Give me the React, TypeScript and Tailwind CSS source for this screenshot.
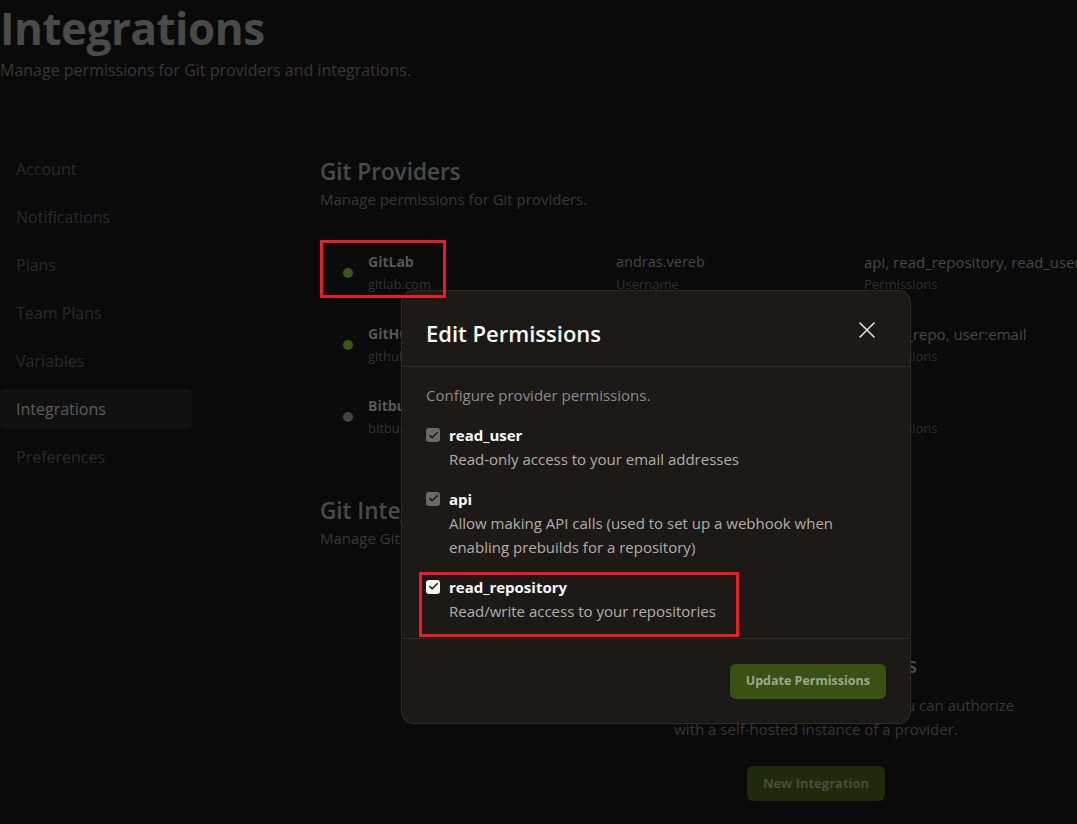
import { Check } from "lucide-react"

const navItems = ["Account", "Notifications", "Plans", "Team Plans", "Variables", "Integrations", "Preferences"]

const providers = [
  { name: "GitLab", host: "gitlab.com", user: "andras.vereb", perms: "api, read_repository, read_user", on: true },
  { name: "GitHub", host: "github.com", user: "andras-vereb", perms: "public_repo, user:email", on: true },
  { name: "Bitbucket", host: "bitbucket.org", user: "", perms: "", on: false },
]

const scopes = [
  { name: "read_user", desc: "Read-only access to your email addresses", locked: true },
  { name: "api", desc: "Allow making API calls (used to set up a webhook when enabling prebuilds for a repository)", locked: true },
  { name: "read_repository", desc: "Read/write access to your repositories", locked: false },
]

function ProviderRow({ p }) {
  return (
    <div className="flex h-[72px] items-center">
      <div className="w-[296px] flex items-center pl-[23px] gap-[15px]">
        <span className={`w-[10px] h-[10px] rounded-full ${p.on ? "bg-[#3a560e]" : "bg-[#444444]"}`} />
        <div className="flex flex-col">
          <span className="text-[14px] font-bold leading-[22px] text-[#575757]">{p.name}</span>
          <span className="text-[13px] leading-[22px] text-[#333333]">{p.host}</span>
        </div>
      </div>
      <div className="w-[248px] flex flex-col">
        <span className="text-[14.5px] leading-[22px] text-[#474747]">{p.user || "—"}</span>
        <span className="text-[13px] leading-[22px] text-[#2f2f2f]">Username</span>
      </div>
      <div className="flex flex-col whitespace-nowrap">
        <span className="text-[15px] leading-[22px] text-[#474747]">{p.perms || "—"}</span>
        <span className="text-[13px] leading-[22px] text-[#2f2f2f]">Permissions</span>
      </div>
    </div>
  )
}

function Scope({ s }) {
  return (
    <div className="flex gap-[9px]">
      <div
        className={`mt-[5px] w-[14px] h-[14px] rounded-[3px] flex items-center justify-center shrink-0 ${
          s.locked ? "bg-[#6b6967]" : "bg-[#f5f5f4]"
        }`}
      >
        <Check size={11} strokeWidth={3.5} className="text-[#1c1917]" />
      </div>
      <div className="flex flex-col">
        <span className="text-[15px] font-bold leading-[24px] text-[#fafaf9]">{s.name}</span>
        <span className="text-[15px] leading-[24.5px] text-[#b3ada7]">{s.desc}</span>
      </div>
    </div>
  )
}

export default function App() {
  return (
    <div
      className="relative w-[1077px] h-[824px] overflow-hidden bg-[#0a0a0a]"
      style={{ fontFamily: '"Open Sans", "Noto Sans", sans-serif' }}
    >
      <header>
        <h1 className="text-[44px] font-bold leading-[56px] tracking-[-0.5px] text-[#4a4a4a]">Integrations</h1>
        <p className="mt-[2px] text-[16px] leading-[24px] text-[#383838]">Manage permissions for Git providers and integrations.</p>
      </header>

      <div className="flex mt-[67px]">
        <nav className="w-[192px] flex flex-col gap-2 shrink-0">
          {navItems.map((n) => (
            <div
              key={n}
              className={`h-10 flex items-center pl-4 rounded-md text-[16px] ${
                n === "Integrations" ? "bg-[#111111] text-[#5c5c5c]" : "text-[#2a2a2a]"
              }`}
            >
              {n}
            </div>
          ))}
        </nav>

        <main className="ml-[128px] w-[992px] shrink-0 mt-[8px]">
          <h2 className="text-[22.5px] font-semibold leading-[30px] text-[#4a4a4a]">Git Providers</h2>
          <p className="text-[15px] leading-[24px] text-[#383838]">Manage permissions for Git providers.</p>
          <div className="mt-[26px] flex flex-col">
            {providers.map((p) => (
              <ProviderRow key={p.name} p={p} />
            ))}
          </div>

          <h2 className="mt-[43px] text-[22.5px] font-semibold leading-[30px] text-[#4a4a4a]">Git Integrations</h2>
          <p className="text-[15px] leading-[24px] text-[#383838]">Manage Git integrations for self-managed instances of GitLab or GitHub.</p>

          <div className="mt-[99px] flex flex-col items-center text-center">
            <h3 className="text-[22px] font-semibold leading-[30px] text-[#4a4a4a]">No Git Integrations</h3>
            <p className="mt-[14px] w-[420px] text-[15px] leading-[24px] text-[#383838]">
              In addition to the default Git Providers you can authorize with a self-hosted instance of a provider.
            </p>
            <button className="mt-[25px] h-[35px] px-4 rounded-md bg-[#1f2a0d] text-[13px] font-bold text-[#474d3b]">
              New Integration
            </button>
          </div>
        </main>
      </div>

      {/* modal */}
      <div className="absolute left-[401px] top-[290px] w-[510px] h-[434px] rounded-xl border border-[#2f2b28] bg-[#1c1917] flex flex-col">
        <div className="h-[76px] flex items-center justify-between pl-6 pr-[35px] border-b border-[#2f2b28]">
          <h2 className="mt-[9px] text-[22px] font-semibold text-[#fafaf9]">Edit Permissions</h2>
          <svg width="16" height="16" viewBox="0 0 16 16" className="mt-[2px]">
            <path d="M1 1L15 15M15 1L1 15" stroke="#e7e5e4" strokeWidth="1.5" strokeLinecap="round" />
          </svg>
        </div>
        <div className="flex-1 px-6 pt-[16px]">
          <p className="text-[15px] leading-[24px] text-[#8f8a85]">Configure provider permissions.</p>
          <div className="mt-[16px] flex flex-col gap-[15px]">
            {scopes.map((s) => (
              <Scope key={s.name} s={s} />
            ))}
          </div>
        </div>
        <div className="h-[85px] border-t border-[#2f2b28] flex items-center justify-end pr-[24px]">
          <button className="h-[35px] px-4 rounded-md bg-[#3a5114] text-[12.5px] font-bold text-[#9ea68c]">
            Update Permissions
          </button>
        </div>
      </div>

      {/* annotation boxes */}
      <div className="absolute left-[320px] top-[240px] w-[126px] h-[58px] border-[3px] border-[#ed1c24]" />
      <div className="absolute left-[419px] top-[572px] w-[320px] h-[65px] border-[3px] border-[#ed1c24]" />
    </div>
  )
}
